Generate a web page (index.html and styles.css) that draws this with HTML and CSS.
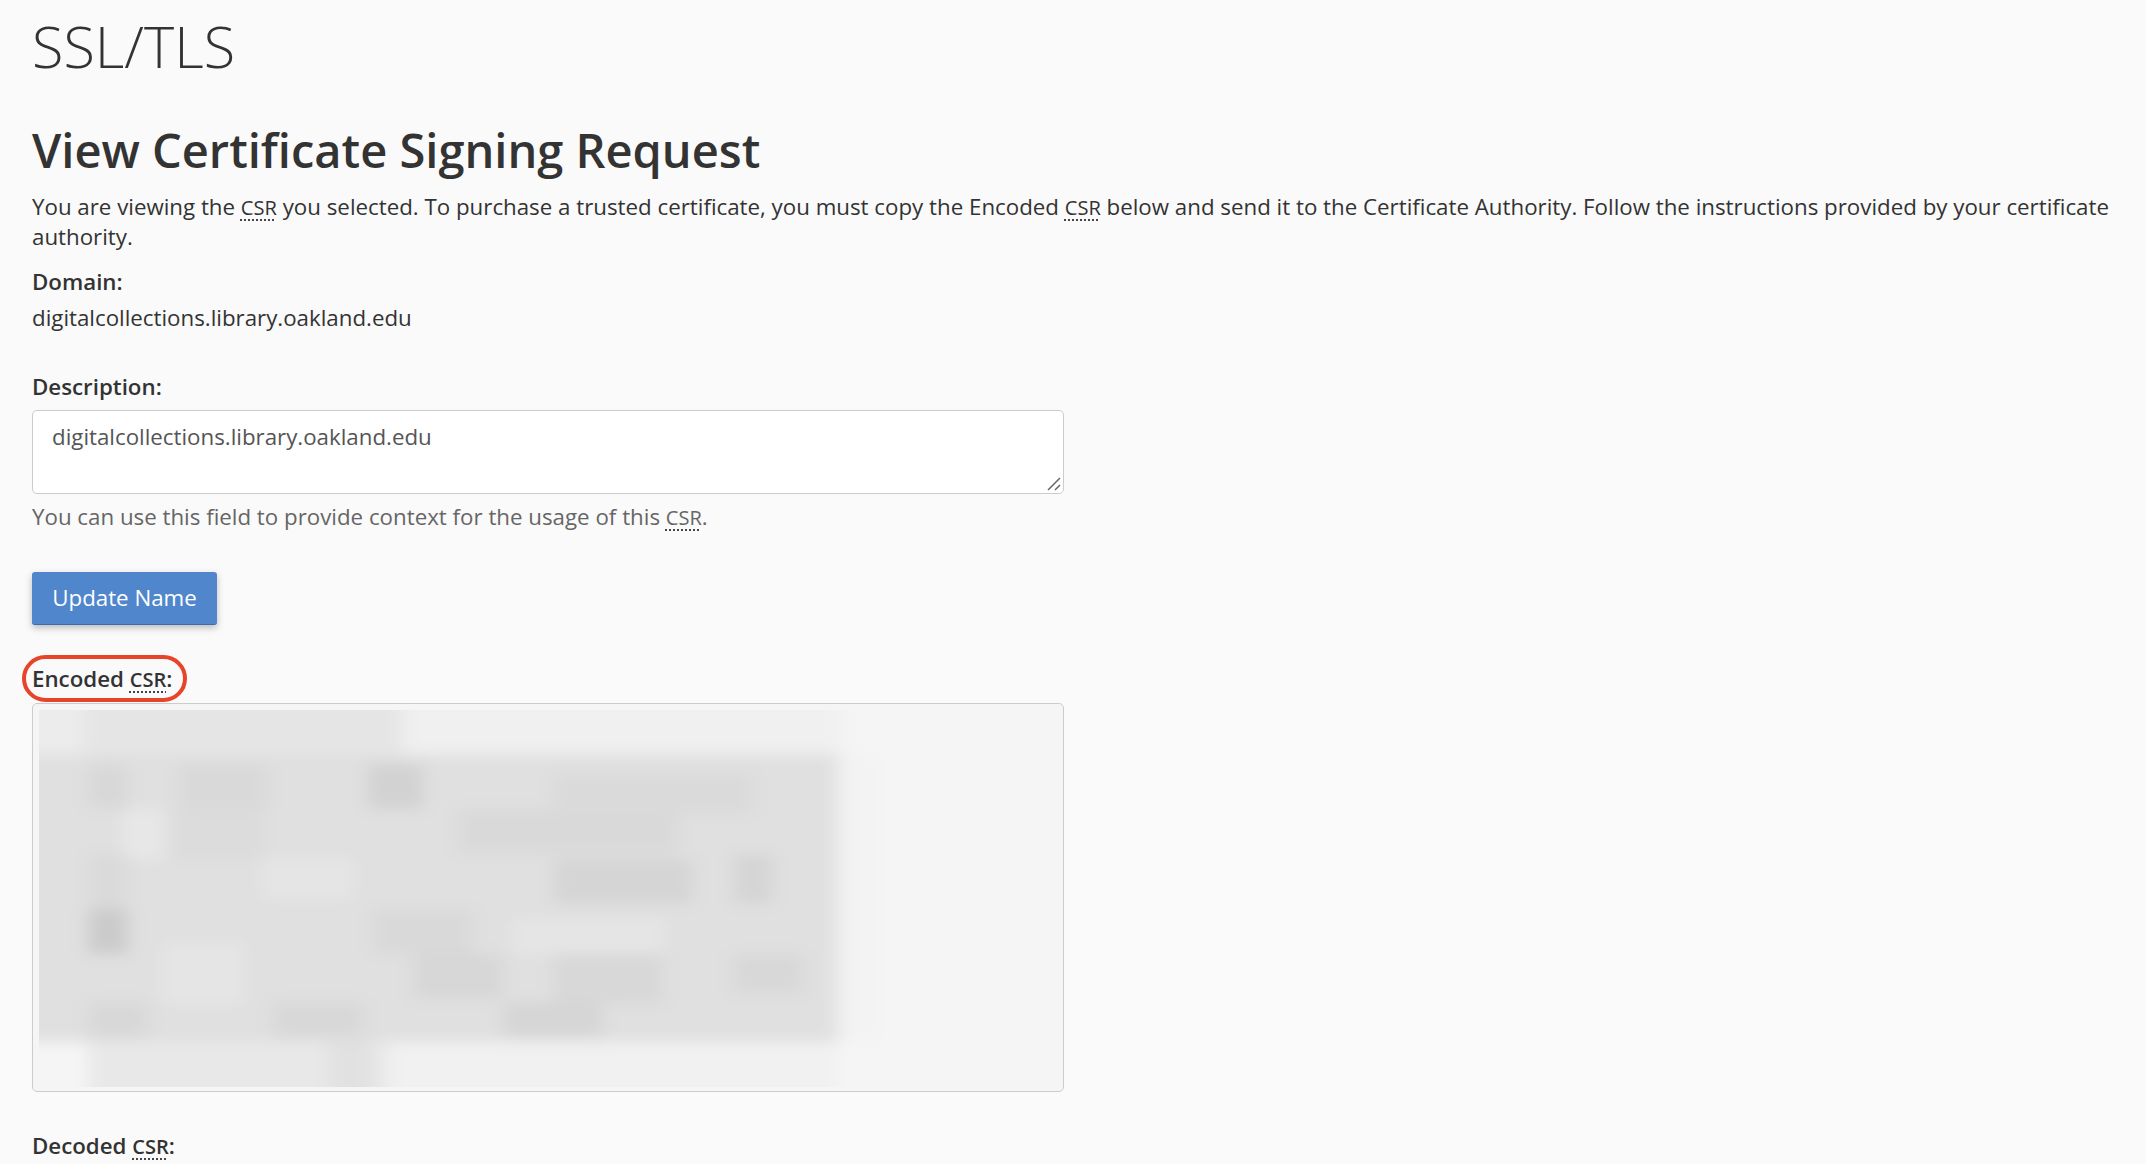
FILE: index.html
```html
<!DOCTYPE html>
<html lang="en">
<head>
  <meta charset="UTF-8" />
  <title>SSL/TLS - View Certificate Signing Request</title>
  <link rel="stylesheet" href="styles.css">
</head>
<body>
  <h1>SSL/TLS</h1>
  <h2>View Certificate Signing Request</h2>
  <p class="intro">You are viewing the <abbr title="Certificate Signing Request">CSR</abbr> you selected. To purchase a trusted certificate, you must copy the Encoded <abbr title="Certificate Signing Request">CSR</abbr> below and send it to the Certificate Authority. Follow the instructions provided by your certificate authority.</p>

  <div class="field-domain">
    <label>Domain:</label>
    <div class="value">digitalcollections.library.oakland.edu</div>
  </div>

  <div class="field">
    <label for="description">Description:</label>
    <div class="textarea-wrap">
      <textarea id="description">digitalcollections.library.oakland.edu</textarea>
      <svg class="grip" width="14" height="14" viewBox="0 0 14 14">
        <path d="M1 13L13 1M8 13L13 8" stroke="#666" stroke-width="1.5" fill="none" />
      </svg>
    </div>
    <div class="help">You can use this field to provide context for the usage of this <abbr title="Certificate Signing Request">CSR</abbr>.</div>
  </div>

  <button class="btn-primary" type="button">Update Name</button>

  <div class="field">
    <label class="circled">Encoded <abbr title="Certificate Signing Request">CSR</abbr>:</label>
    <div class="encoded">
      <!-- the certificate text is blurred out in the screenshot -->
      <svg width="1030" height="387" viewBox="0 0 1030 387">
        <defs>
          <filter id="smear" x="-5%" y="-5%" width="110%" height="110%">
            <feGaussianBlur stdDeviation="9 7" />
          </filter>
          <clipPath id="inner"><rect x="6" y="6" width="1018" height="377" /></clipPath>
        </defs>
        <g clip-path="url(#inner)">
          <g filter="url(#smear)">
            <rect x="-20" y="-20" width="70" height="70" fill="#ececec" />
            <rect x="50" y="-20" width="320" height="70" fill="#e5e5e5" />
            <rect x="370" y="-20" width="440" height="70" fill="#f0f0f0" />
            <rect x="-20" y="50" width="825" height="288" fill="#e0e0e0" />
            <rect x="805" y="50" width="40" height="288" fill="#f3f3f3" />
            <rect x="55" y="338" width="300" height="70" fill="#e8e8e8" />
            <rect x="295" y="338" width="45" height="70" fill="#e1e1e1" />
            <rect x="355" y="338" width="450" height="70" fill="#f1f1f1" />
            <rect x="55" y="60" width="40" height="45" fill="#d8d8d8" />
            <rect x="145" y="60" width="90" height="45" fill="#d9d9d9" />
            <rect x="335" y="60" width="55" height="45" fill="#d2d2d2" />
            <rect x="520" y="70" width="200" height="40" fill="#dadada" />
            <rect x="140" y="105" width="90" height="50" fill="#dcdcdc" />
            <rect x="425" y="105" width="220" height="45" fill="#d9d9d9" />
            <rect x="90" y="105" width="40" height="50" fill="#e7e7e7" />
            <rect x="55" y="150" width="40" height="70" fill="#dadada" />
            <rect x="520" y="155" width="140" height="45" fill="#d5d5d5" />
            <rect x="700" y="150" width="40" height="50" fill="#d5d5d5" />
            <rect x="230" y="155" width="90" height="40" fill="#e5e5e5" />
            <rect x="55" y="205" width="40" height="45" fill="#cbcbcb" />
            <rect x="340" y="205" width="100" height="45" fill="#d9d9d9" />
            <rect x="480" y="215" width="150" height="35" fill="#e5e5e5" />
            <rect x="380" y="250" width="90" height="45" fill="#d7d7d7" />
            <rect x="520" y="250" width="110" height="50" fill="#d8d8d8" />
            <rect x="700" y="250" width="70" height="40" fill="#d8d8d8" />
            <rect x="130" y="240" width="80" height="60" fill="#e5e5e5" />
            <rect x="55" y="298" width="60" height="35" fill="#d8d8d8" />
            <rect x="240" y="298" width="90" height="35" fill="#d8d8d8" />
            <rect x="470" y="298" width="100" height="35" fill="#d6d6d6" />
          </g>
        </g>
      </svg>
    </div>
  </div>

  <div class="field">
    <label>Decoded <abbr title="Certificate Signing Request">CSR</abbr>:</label>
  </div>
</body>
</html>
```

FILE: styles.css
```css
* {
  box-sizing: border-box;
}

body {
  margin: 0;
  padding: 12px 32px 0;
  background: #fafafa;
  color: #333;
  font-family: "Open Sans", sans-serif;
  font-size: 22.3px;
  line-height: 30px;
}

h1 {
  margin: 0;
  font-size: 57.6px;
  font-weight: 300;
  line-height: 68px;
}

h2 {
  margin: 40px 0 12px;
  font-size: 47px;
  font-weight: 600;
  line-height: 60px;
}

p {
  margin: 0;
}

abbr {
  font-size: 90%;
  line-height: 1;
  text-decoration: underline dotted 1.5px #444;
  text-underline-offset: 4px;
}

label {
  display: block;
  font-weight: 600;
}

.field-domain {
  margin-top: 15px;
}

.value {
  margin-top: 6px;
}

.field {
  margin-top: 39px;
}

.textarea-wrap {
  position: relative;
  width: 1032px;
  margin-top: 8px;
}

textarea {
  display: block;
  width: 100%;
  height: 84px;
  padding: 11px 19px 0;
  background: #fff;
  border: 1.5px solid #ccc;
  border-radius: 5px;
  color: #555;
  font: inherit;
  resize: none;
}

.grip {
  position: absolute;
  right: 3px;
  bottom: 3px;
}

.help {
  margin-top: 8px;
  color: #666;
}

.btn-primary {
  display: block;
  width: 185px;
  height: 53px;
  margin-top: 40px;
  padding: 0;
  background: #4f86cc;
  border: 0;
  border-bottom: 1.5px solid #3a6db0;
  border-radius: 3px;
  box-shadow: 0 3px 7px rgba(0, 0, 0, 0.25);
  color: #fff;
  font: inherit;
  cursor: pointer;
}

.circled {
  position: relative;
  width: fit-content;
}

/* red marker drawn round the label */
.circled::before {
  content: "";
  position: absolute;
  top: -9px;
  left: -10px;
  box-sizing: border-box;
  width: 165px;
  height: 47px;
  border: 4px solid #e8442a;
  border-radius: 24px;
}

.encoded {
  width: 1032px;
  height: 389px;
  margin-top: 9px;
  background: #f5f5f5;
  border: 1.5px solid #ccc;
  border-radius: 5px;
  overflow: hidden;
}

.encoded svg {
  display: block;
}
```
